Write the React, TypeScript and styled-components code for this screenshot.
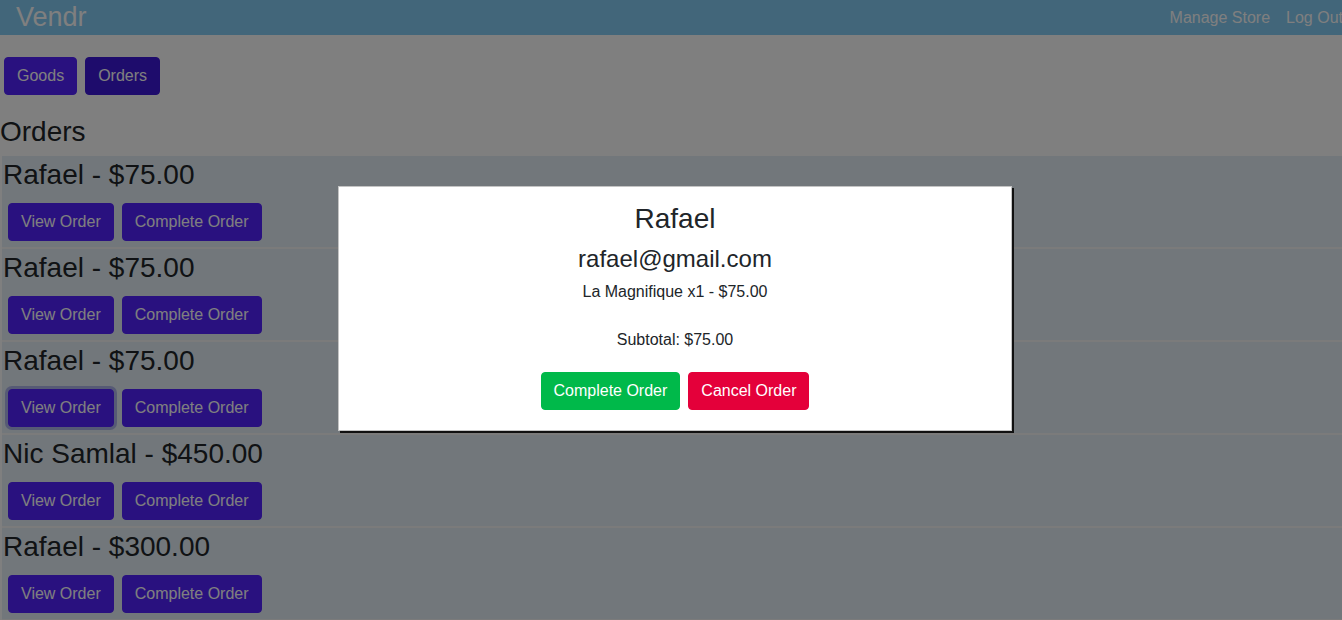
import React from "react";
import styled, { createGlobalStyle } from "styled-components";

const GlobalStyle = createGlobalStyle`
  html, body { margin: 0; padding: 0; background: #ffffff; }
  body {
    font-family: "Liberation Sans", Arial, Helvetica, sans-serif;
    color: #212529;
    overflow: hidden;
  }
  * { box-sizing: border-box; }
`;

const Page = styled.div`
  width: 1342px;
  height: 620px;
  overflow: hidden;
  position: relative;
`;

const NavBar = styled.header`
  height: 35px;
  background: #84ccf4;
  display: flex;
  align-items: center;
  padding-left: 16px;
`;

const Brand = styled.div`
  font-size: 27px;
  color: #ffffff;
  line-height: 35px;
`;

const NavLinks = styled.nav`
  margin-left: auto;
  margin-right: -9px;
  display: flex;
`;

const NavLink = styled.a`
  color: #ffffff;
  font-size: 16px;
  padding: 0 8px;
  line-height: 34px;
  text-decoration: none;
  white-space: nowrap;
`;

const Toolbar = styled.div`
  display: flex;
  gap: 8px;
  padding: 22px 4px 0;
`;

const Button = styled.button<{ $bg: string }>`
  font-family: "Liberation Sans", Arial, Helvetica, sans-serif;
  font-size: 16px;
  line-height: 24px;
  padding: 6px 12px;
  border: 1px solid ${(p) => p.$bg};
  border-radius: 4px;
  background: ${(p) => p.$bg};
  color: #ffffff;
  white-space: nowrap;
  cursor: pointer;
`;

const Heading = styled.h3`
  font-size: 28px;
  font-weight: 400;
  line-height: 34px;
  margin: 20px 0 7px;
`;

const OrderList = styled.div`
  display: flex;
  flex-direction: column;
  padding-left: 2px;
`;

const OrderRow = styled.div`
  background: #e4eef6;
  border-bottom: 2px solid #f6f6f6;
  padding: 0 0 6px 1px;
`;

const OrderTitle = styled.h3`
  font-size: 28px;
  font-weight: 400;
  line-height: 34px;
  margin: 2px 0 11px;
`;

const Actions = styled.div`
  display: flex;
  gap: 8px;
  padding-left: 5px;
`;

const RowButton = styled(Button)<{ $focus?: boolean }>`
  box-shadow: ${(p) => (p.$focus ? "0 0 0 3px rgba(150, 155, 230, 0.7)" : "none")};
`;

const Backdrop = styled.div`
  position: absolute;
  inset: 0;
  background: rgba(0, 0, 0, 0.5);
`;

const Modal = styled.div`
  position: absolute;
  left: 338px;
  top: 186px;
  width: 674px;
  background: #ffffff;
  border: 1px solid #c4c4c4;
  box-shadow: 2px 2px 0 #111;
  padding: 15px 16px 20px;
  text-align: center;
  display: flex;
  flex-direction: column;
  align-items: center;
`;

const ModalName = styled.h3`
  font-size: 28px;
  font-weight: 400;
  line-height: 34px;
  margin: 0 0 8px;
`;

const ModalEmail = styled.h4`
  font-size: 24px;
  font-weight: 400;
  line-height: 29px;
  margin: 0 0 7px;
`;

const ModalLine = styled.p<{ $gap: number }>`
  font-size: 16px;
  line-height: 24px;
  margin: 0 0 ${(p) => p.$gap}px;
`;

const ModalActions = styled.div`
  display: flex;
  gap: 8px;
  justify-content: center;
`;

const orders = [
  { name: "Rafael", total: "$75.00" },
  { name: "Rafael", total: "$75.00" },
  { name: "Rafael", total: "$75.00", focus: true },
  { name: "Nic Samlal", total: "$450.00" },
  { name: "Rafael", total: "$300.00" },
];

export default function App() {
  return (
    <Page>
      <GlobalStyle />
      <NavBar>
        <Brand>Vendr</Brand>
        <NavLinks>
          <NavLink>Manage Store</NavLink>
          <NavLink>Log Out</NavLink>
        </NavLinks>
      </NavBar>
      <Toolbar>
        <Button $bg="#5222fe">Goods</Button>
        <Button $bg="#3c18d8">Orders</Button>
      </Toolbar>
      <Heading>Orders</Heading>
      <OrderList>
        {orders.map((o, i) => (
          <OrderRow key={i}>
            <OrderTitle>
              {o.name} - {o.total}
            </OrderTitle>
            <Actions>
              <RowButton $bg="#5222fe" $focus={o.focus}>
                View Order
              </RowButton>
              <RowButton $bg="#5222fe">Complete Order</RowButton>
            </Actions>
          </OrderRow>
        ))}
      </OrderList>
      <Backdrop />
      <Modal>
        <ModalName>Rafael</ModalName>
        <ModalEmail>rafael@gmail.com</ModalEmail>
        <ModalLine $gap={24}>La Magnifique x1 - $75.00</ModalLine>
        <ModalLine $gap={20}>Subtotal: $75.00</ModalLine>
        <ModalActions>
          <Button $bg="#00b94a">Complete Order</Button>
          <Button $bg="#e4003a">Cancel Order</Button>
        </ModalActions>
      </Modal>
    </Page>
  );
}
